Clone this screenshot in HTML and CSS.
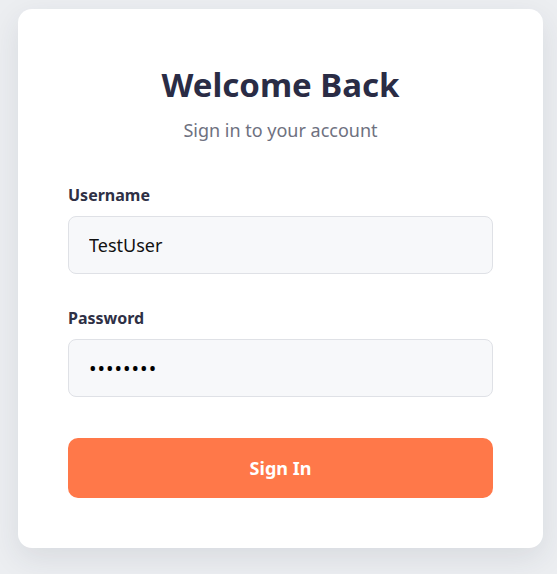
FILE: index.html
```html
<!DOCTYPE html>
<html lang="en">
<head>
<meta charset="utf-8">
<title>Sign In</title>
<link rel="stylesheet" href="styles.css">
</head>
<body>
<main class="card">
  <h1 class="title">Welcome Back</h1>
  <p class="subtitle">Sign in to your account</p>
  <form class="form">
    <div class="field">
      <label class="label" for="u">Username</label>
      <input class="input" id="u" type="text" value="TestUser">
    </div>
    <div class="field">
      <label class="label" for="p">Password</label>
      <input class="input input-secret" id="p" type="password" value="password">
    </div>
    <button class="btn" type="button">Sign In</button>
  </form>
</main>
</body>
</html>
```

FILE: styles.css
```css
* { box-sizing: border-box; }
html, body { margin: 0; }
body {
  background: #eceef1;
  font-family: "Noto Sans", "Open Sans", sans-serif;
  padding: 9px 14px 0 18px;
  height: 574px;
  overflow: hidden;
}
.card {
  width: 525px;
  height: 539px;
  background: #ffffff;
  border-radius: 14px;
  box-shadow: 0 10px 30px rgba(40, 45, 70, 0.10);
  padding: 57px 50px 50px;
  display: flex;
  flex-direction: column;
}
.title {
  margin: 0;
  font-size: 33px;
  line-height: 38px;
  font-weight: 700;
  text-align: center;
  color: #2a2c45;
}
.subtitle {
  margin: 14px 0 0;
  font-size: 18px;
  line-height: 24px;
  text-align: center;
  color: #6e717f;
}
.form {
  margin-top: 42px;
  display: flex;
  flex-direction: column;
}
.field {
  display: flex;
  flex-direction: column;
  gap: 10px;
  margin-bottom: 33px;
}
.field:nth-child(2) { margin-bottom: 41px; }
.label {
  font-size: 16px;
  line-height: 22px;
  font-weight: 700;
  color: #2e3045;
}
.input {
  height: 58px;
  border: 1px solid #dfe1e6;
  border-radius: 8px;
  background: #f7f8fa;
  padding: 0 20px;
  font-family: inherit;
  font-size: 18px;
  color: #111;
  outline: none;
}
.input-secret {
  font-size: 20px;
  letter-spacing: 1px;
  color: #000;
}
.btn {
  height: 60px;
  border: 0;
  border-radius: 10px;
  background: #ff7849;
  color: #ffffff;
  font-family: inherit;
  font-size: 18px;
  font-weight: 700;
}
```
